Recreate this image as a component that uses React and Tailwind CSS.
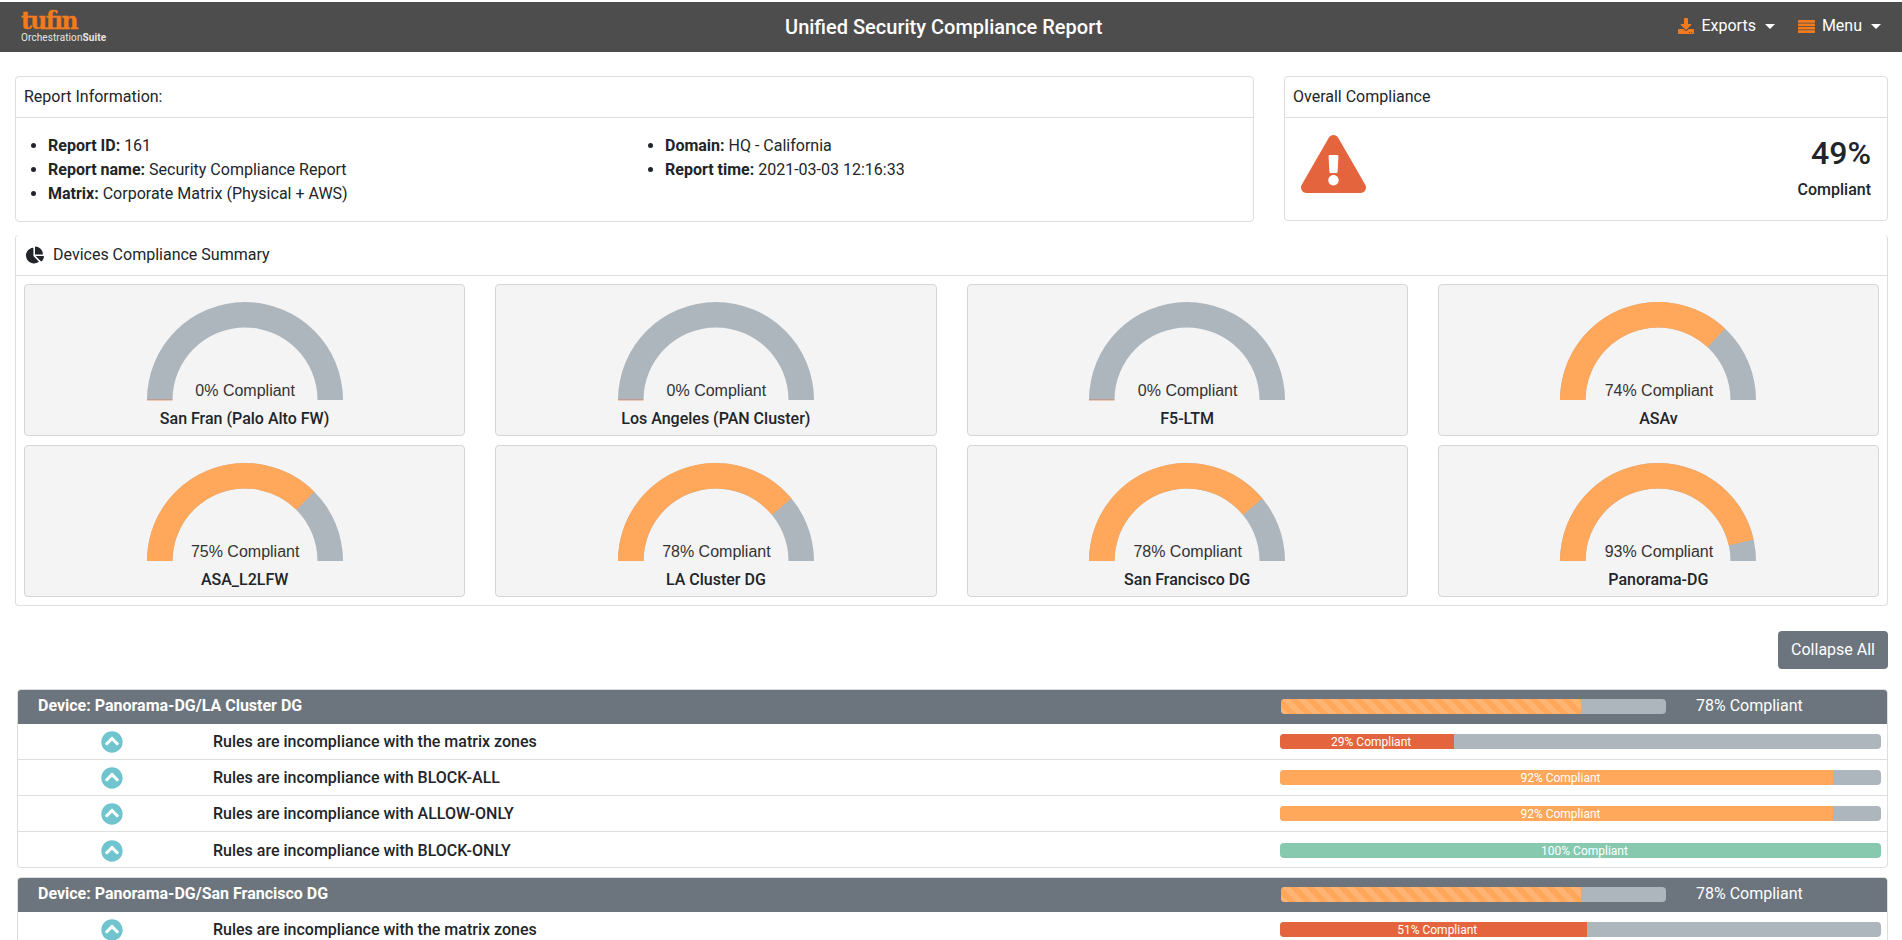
import React from 'react';
import { FaExclamationTriangle, FaDownload, FaChartPie, FaChevronCircleUp } from 'react-icons/fa';

const GREY = '#adb5bd';

// half donut, angle runs left to right over the top
const Gauge = ({ pct }) => {
  const cx = 100, cy = 100, R = 98, r = 72.5;
  const a = Math.PI * (1 - pct / 100);
  const ox = cx + R * Math.cos(a), oy = cy - R * Math.sin(a);
  const ix = cx + r * Math.cos(a), iy = cy - r * Math.sin(a);
  return (
    <svg width="200" height="101" viewBox="0 0 200 101" className="block">
      <path d={`M2 100 A98 98 0 0 1 198 100 L172.5 100 A72.5 72.5 0 0 0 27.5 100 Z`} fill={GREY} />
      {pct > 0 && (
        <path d={`M2 100 A98 98 0 0 1 ${ox} ${oy} L${ix} ${iy} A72.5 72.5 0 0 0 27.5 100 Z`} fill="#ffa75a" />
      )}
      {pct === 0 && <rect x="2" y="99.5" width="25.5" height="1" fill="#e4643d" opacity="0.6" />}
    </svg>
  );
};

const DeviceTile = ({ pct, name }) => (
  <div className="relative h-[152px] rounded border border-[#d5d5d5] bg-[#f4f4f4] pt-[15px]">
    <div className="flex justify-center"><Gauge pct={pct} /></div>
    <div className="absolute left-0 right-0 top-[94px] pl-[1px] text-center font-['Liberation_Sans'] text-[16px] leading-[24px] text-[#333]">
      {pct}% Compliant
    </div>
    <div className="mt-[7px] text-center text-[16px] leading-[22px] font-medium">{name}</div>
  </div>
);

const Bar = ({ pct, color, label, striped }) => (
  <div className="flex h-[15px] overflow-hidden rounded bg-[#adb5bd] text-[12px] leading-[16px] text-white">
    <div
      className={`pl-[8px] text-center ${striped ? "bg-[linear-gradient(45deg,rgba(255,255,255,.15)_25%,transparent_25%,transparent_50%,rgba(255,255,255,.15)_50%,rgba(255,255,255,.15)_75%,transparent_75%,transparent)] bg-[length:16px_16px]" : ''}`}
      style={{ width: `${pct}%`, backgroundColor: color }}
    >
      {label}
    </div>
  </div>
);

const Row = ({ name, pct, color }) => (
  <div className="flex h-[36px] items-center border-b border-[#dedede] last:border-b-0 last:pb-[1px] nth-[5]:h-[35px] nth-[5]:pt-[3px]">
    <div className="flex w-[195px] shrink-0 justify-center pr-[8px]">
      <FaChevronCircleUp className="text-[22px] text-[#6fc4ce]" />
    </div>
    <div className="w-[1067px] shrink-0 font-medium text-[#212529]">{name}</div>
    <div className="mr-[6px] flex-1">
      <Bar pct={pct} color={color} label={`${pct}% Compliant`} />
    </div>
  </div>
);

const DevicePanel = ({ name, rows }) => (
  <div className="ml-[2px] overflow-hidden rounded border border-[#dedede]">
    <div className="flex h-[34px] items-center bg-[#6c757d] pb-[2px] text-white">
      <div className="w-[1263px] shrink-0 pl-[20px] font-bold">Device: {name}</div>
      <div className="w-[385px] shrink-0">
        <Bar pct={78} color="#ffa75a" striped />
      </div>
      <div className="pl-[30px]">78% Compliant</div>
    </div>
    {rows.map((r) => <Row key={r.name} {...r} />)}
  </div>
);

const tiles = [
  { pct: 0, name: 'San Fran (Palo Alto FW)' },
  { pct: 0, name: 'Los Angeles (PAN Cluster)' },
  { pct: 0, name: 'F5-LTM' },
  { pct: 74, name: 'ASAv' },
  { pct: 75, name: 'ASA_L2LFW' },
  { pct: 78, name: 'LA Cluster DG' },
  { pct: 78, name: 'San Francisco DG' },
  { pct: 93, name: 'Panorama-DG' },
];

const firstRows = [
  { name: 'Rules are incompliance with the matrix zones', pct: 29, color: '#e4643d' },
  { name: 'Rules are incompliance with BLOCK-ALL', pct: 92, color: '#ffa75a' },
  { name: 'Rules are incompliance with ALLOW-ONLY', pct: 92, color: '#ffa75a' },
  { name: 'Rules are incompliance with BLOCK-ONLY', pct: 100, color: '#87c9af' },
];

const Caret = () => (
  <span className="ml-[9px] h-0 w-0 border-x-[5px] border-t-[5px] border-x-transparent border-t-white" />
);

const App = () => {
  return (
    <div className="h-[940px] overflow-hidden bg-white font-['Roboto',sans-serif] text-[16px] text-[#212529]">
      <header className="mt-[2px] flex h-[50px] items-center bg-[#4d4d4d] px-[21px]">
        <div className="w-[200px]">
          <div className="font-['DejaVu_Serif',serif] text-[23.5px] leading-[22px] font-bold tracking-[-1.6px] text-[#f37b1d] [-webkit-text-stroke:0.3px_#f37b1d]">tufın</div>
          <div className="text-[10px] leading-[12px] tracking-[0.1px] text-[#e6e6e6]">Orchestration<span className="font-bold">Suite</span></div>
        </div>
        <div className="flex-1 pr-[12px] text-center text-[20px] font-medium text-white">Unified Security Compliance Report</div>
        <div className="mb-[2px] flex items-center text-white">
          <FaDownload className="mr-[7px] text-[16px] text-[#f37b1d]" />
          <span>Exports</span>
          <Caret />
          <svg width="17" height="13" viewBox="0 0 17 13" className="ml-[23px] mr-[7px]" fill="#f37b1d">
            <rect x="0" y="0" width="17" height="2.7" rx="0.5" />
            <rect x="0" y="3.4" width="17" height="2.7" rx="0.5" />
            <rect x="0" y="6.8" width="17" height="2.7" rx="0.5" />
            <rect x="0" y="10.2" width="17" height="2.8" rx="0.5" />
          </svg>
          <span>Menu</span>
          <Caret />
        </div>
      </header>

      <div className="pl-[15px] pr-[14px]">
        <div className="mt-[24px] flex items-start">
          <section className="h-[146px] w-[1239px] shrink-0 rounded border border-[#dedede]">
            <div className="flex h-[41px] items-center border-b border-[#dedede] pl-[8px]">Report Information:</div>
            <div className="flex pt-[16px] leading-[24px]">
              <ul className="w-[616px] list-disc pl-[32px]">
                <li><b>Report ID:</b> 161</li>
                <li><b>Report name:</b> Security Compliance Report</li>
                <li><b>Matrix:</b> Corporate Matrix (Physical + AWS)</li>
              </ul>
              <ul className="list-disc pl-[33px]">
                <li><b>Domain:</b> HQ - California</li>
                <li><b>Report time:</b> 2021-03-03 12:16:33</li>
              </ul>
            </div>
          </section>
          <section className="ml-[30px] h-[145px] flex-1 rounded border border-[#dedede]">
            <div className="flex h-[41px] items-center border-b border-[#dedede] pl-[8px]">Overall Compliance</div>
            <div className="flex items-start justify-between pl-[16px] pr-[16px] pt-[11px]">
              <FaExclamationTriangle className="mt-[5px] h-[60px] w-[65px] text-[#e4643d]" />
              <div className="text-right">
                <div className="text-[32px] leading-[48px] font-medium">49%</div>
                <div className="mt-[2px] font-medium leading-[22px]">Compliant</div>
              </div>
            </div>
          </section>
        </div>

        <section className="mt-[13px] rounded border border-t-0 border-[#dedede]">
          <div className="flex h-[41px] items-center gap-[9px] border-b border-[#dedede] pl-[10px]">
            <FaChartPie className="text-[18px]" />
            <span>Devices Compliance Summary</span>
          </div>
          <div className="grid grid-cols-4 gap-x-[30px] gap-y-[9px] px-[8px] py-[8px]">
            {tiles.map((t) => <DeviceTile key={t.name} {...t} />)}
          </div>
        </section>

        <div className="mt-[25px] flex justify-end">
          <button className="h-[38px] rounded bg-[#6c757d] px-[13px] text-white">Collapse All</button>
        </div>

        <div className="mt-[20px] flex flex-col gap-[9px]">
          <DevicePanel name="Panorama-DG/LA Cluster DG" rows={firstRows} />
          <DevicePanel
            name="Panorama-DG/San Francisco DG"
            rows={[{ name: 'Rules are incompliance with the matrix zones', pct: 51, color: '#e4643d' }]}
          />
        </div>
      </div>
    </div>
  );
};

export default App;
